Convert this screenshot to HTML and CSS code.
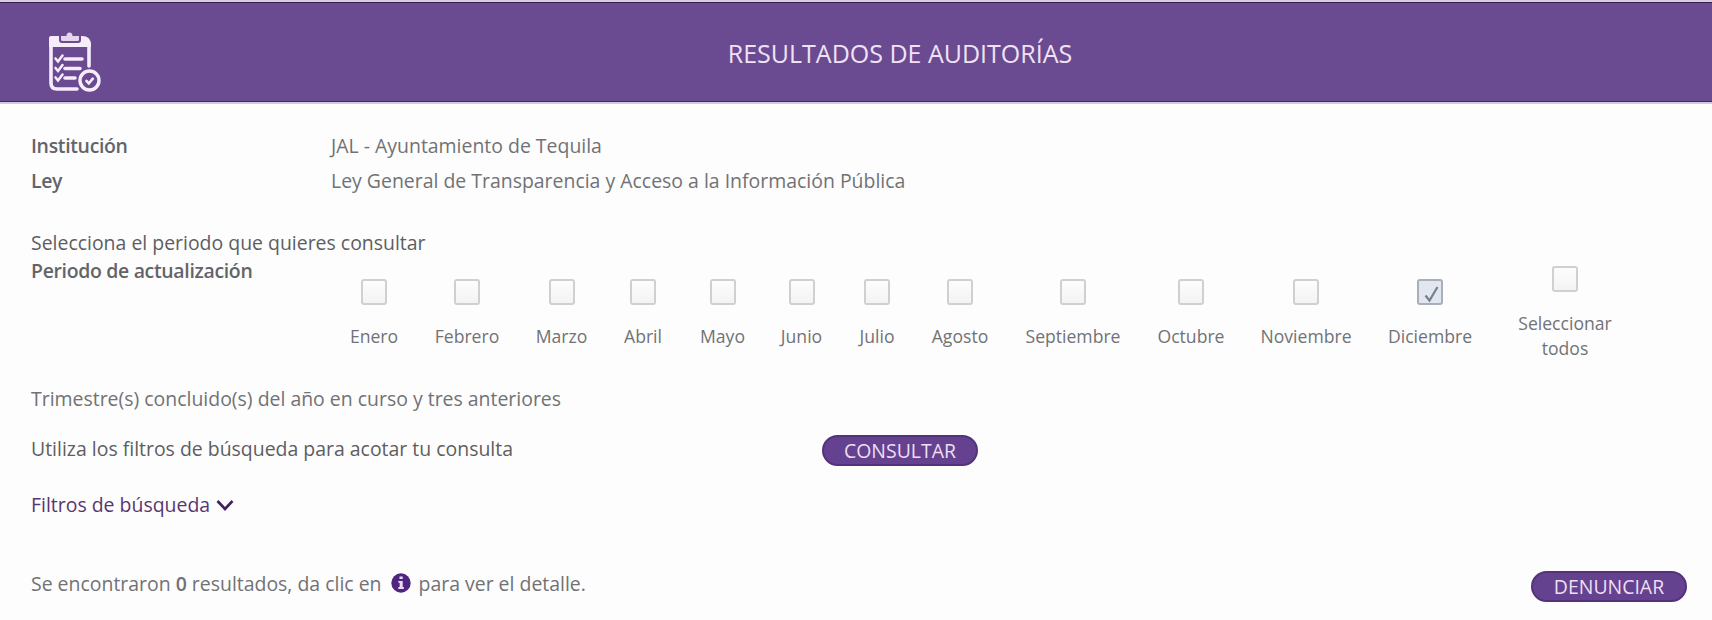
FILE: index.html
```html
<!DOCTYPE html>
<html lang="es">
<head>
<meta charset="utf-8">
<meta name="viewport" content="width=device-width, initial-scale=1">
<title>Resultados de auditorías</title>
<link rel="stylesheet" href="styles.css">
</head>
<body>

<header class="header">
  <svg class="headerIcon" width="54" height="62" viewBox="0 0 54 62" fill="none" stroke="#f6ecfa" stroke-linecap="round">
    <path d="M3 8v44q0 6 6 6h20M41 35V12" stroke-width="3.600"/>
    <path d="M1 16V7q0-2 2-2h8v4q0 3 3 3h16q3 0 3-3V5h1q9 0 9 9v2z" fill="#f6ecfa" stroke="none"/>
    <path d="M13 5h5.500q0-3.500 3-3.500t3 3.500H31v3.500q0 1.500-1.500 1.500h-15q-1.500 0-1.500-1.500z" fill="#e6d4ee" stroke="none"/>
    <path d="M7.500 27.500l2.500 3 4.500-6M7.500 37l2.500 3 4.500-6M7.500 46.500l2.500 3 4.500-6" stroke-width="2.600"/>
    <path d="M17 28h17M17 37.500h15M17 47h10" stroke-width="3.600"/>
    <circle cx="41.500" cy="49.500" r="9.500" stroke-width="3.400"/>
    <path d="M38.500 50l2.300 2.300 4-4.600" stroke-width="2.600"/>
  </svg>
  <h1 class="title">RESULTADOS DE AUDITORÍAS</h1>
</header>

<div class="container">
  <div class="row institution">
    <b class="name">Institución</b>
    <span>JAL - Ayuntamiento de Tequila</span>
  </div>
  <div class="row law">
    <b class="name">Ley</b>
    <span>Ley General de Transparencia y Acceso a la Información Pública</span>
  </div>

  <p class="dark">Selecciona el periodo que quieres consultar</p>
  <div class="row period">
    <b class="name">Periodo de actualización</b>
    <div class="months">
      <label class="month"><input type="checkbox" class="check">Enero</label>
      <label class="month"><input type="checkbox" class="check">Febrero</label>
      <label class="month"><input type="checkbox" class="check">Marzo</label>
      <label class="month"><input type="checkbox" class="check">Abril</label>
      <label class="month"><input type="checkbox" class="check">Mayo</label>
      <label class="month"><input type="checkbox" class="check">Junio</label>
      <label class="month"><input type="checkbox" class="check">Julio</label>
      <label class="month"><input type="checkbox" class="check">Agosto</label>
      <label class="month"><input type="checkbox" class="check">Septiembre</label>
      <label class="month"><input type="checkbox" class="check">Octubre</label>
      <label class="month"><input type="checkbox" class="check">Noviembre</label>
      <label class="month">
        <span class="checkBox">
          <input type="checkbox" class="check" checked>
          <svg class="tick" width="26" height="26" viewBox="0 0 26 26" fill="none" stroke="#75808e" stroke-width="2.200"><path d="M8.500 16.500l4 5 8-13.500"/></svg>
        </span>Diciembre</label>
      <label class="month"><input type="checkbox" class="check">Seleccionar<br>todos</label>
    </div>
  </div>

  <p class="note">Trimestre(s) concluido(s) del año en curso y tres anteriores</p>
  <div class="row search dark">
    <span>Utiliza los filtros de búsqueda para acotar tu consulta</span>
    <button type="button" class="btn">CONSULTAR</button>
  </div>
  <a class="filters">Filtros de búsqueda
    <svg width="18" height="12" viewBox="0 0 18 12" fill="none" stroke="#42205e" stroke-width="2.600"><path d="M1.500 2l7.500 8 7.500-8"/></svg>
  </a>
  <div class="row results">
    <div class="found"><span>Se encontraron <b>0</b> resultados, da clic en</span>
      <svg class="info" width="20" height="20" viewBox="0 0 21 21"><circle cx="10.500" cy="10.500" r="10.200" fill="#4f2580"/><path d="M8.900 3.700h3.400v2.700H8.900zM7.700 8.300h4.600v6.400h1.200v2H7.700v-2h1.400v-4.400H7.700z" fill="#e9dcf0"/></svg>
      <span>para ver el detalle.</span></div>
    <button type="button" class="btn">DENUNCIAR</button>
  </div>
</div>

</body>
</html>
```

FILE: styles.css
```css
* {box-sizing: border-box;}
body {
  margin: 0;
  background-color: #fdfdfd;
  color: #717275;
  font-family: "Open Sans", Arial, sans-serif;
  font-size: 19.45px;
  line-height: 28px;
}
p, h1 {margin: 0;}
b {font-weight: 600;}

.header {
  display: grid;
  grid-template-columns: 48px 54px 1fr 14px;
  height: 104px;
  border-top: 2px solid #d8cbe3;
  border-bottom: 2px solid #d5c9df;
  background-color: #6a4a90;
  box-shadow: inset 0 1px #35204f, inset 0 -1px #43285f;
}
.headerIcon {
  grid-column: 2;
  margin-top: 29px;
}
.title {
  padding-top: 33px;
  color: #f0e2f5;
  font-size: 25px;
  font-weight: 400;
  line-height: 36px;
  text-align: center;
}

.container {padding: 28px 25px 0 31px;}
.row {display: flex;}
.name {
  flex: none;
  width: 300px;
  color: #636469;
  letter-spacing: -0.32px;
}
.institution {height: 35px;}
.law {height: 62px;}
.dark {color: #5d5e62;}

.period {height: 128px;}
.months {
  display: grid;
  grid-template-columns: 86px 100px 89px 74px 85px 73px 78px 88px 138px 98px 132px 116px 154px;
  align-items: center;
  height: 113px;
}
.month {
  display: flex;
  flex-direction: column;
  align-items: center;
  font-size: 17.6px;
  line-height: 25px;
  text-align: center;
}
.check {
  appearance: none;
  display: block;
  width: 26px;
  height: 26px;
  margin: 0 0 19px;
  border: 2px solid #d0d0d2;
  border-radius: 3px;
  background: linear-gradient(#fdfdfd, #f3f3f5);
}
.check:checked {
  border-color: #a9afb9;
  background: #e2e7ef;
}
.checkBox {position: relative;}
.tick {
  position: absolute;
  top: 0;
  left: 0;
}

.note {height: 50px;}
.search {height: 56px;}
.search .btn {margin-left: 309px;}
.btn {
  width: 156px;
  height: 31px;
  padding: 0;
  border: 2px solid #54327c;
  border-radius: 16px;
  background-color: #65428f;
  color: #ecdff2;
  font-family: inherit;
  font-size: 19.45px;
  line-height: 26px;
}
.filters {
  display: flex;
  align-items: center;
  gap: 6px;
  height: 28px;
  margin-bottom: 51px;
  color: #5a3570;
}
.results {justify-content: space-between;}
.results .btn {margin-top: 1px;}
.found {
  display: flex;
  align-items: center;
  height: 28px;
}
.info {margin: 0 8px 2px 9px;}
```
